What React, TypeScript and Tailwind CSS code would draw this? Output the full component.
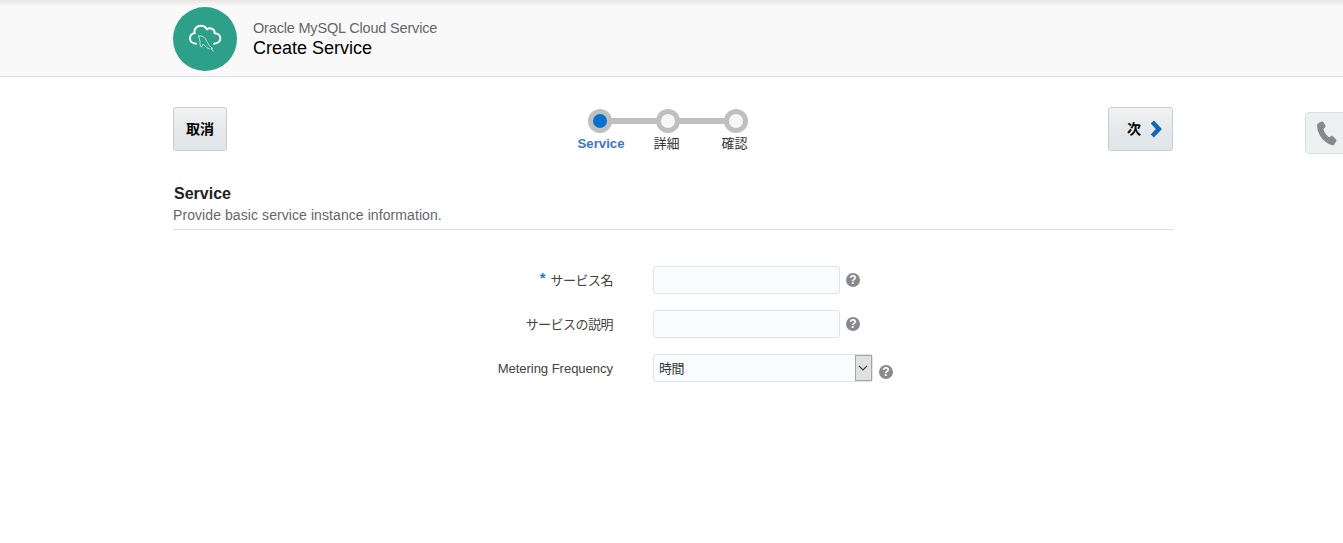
import React from "react";

const jp = "font-['Liberation_Sans','Noto_Sans_CJK_JP',sans-serif]";

function ServiceLogo() {
  return (
    <div className="h-16 w-16 shrink-0 rounded-full bg-[#2ca089]">
      <svg viewBox="-27 -33 192 192" className="h-16 w-16" fill="none" stroke="#fff" strokeLinecap="round" strokeLinejoin="round">
        <path
          strokeWidth="6"
          d="M42 77C31 77 24 70 24 61C24 52 30 46 38 46C35 32 45 23 57 23C66 23 71 27 75 34C85 27 99 34 98 46C108 46 115 53 115 61C115 70 108 77 96 77"
        />
        <path
          strokeWidth="2"
          d="M50 54C56 52 65 55 70 62C75 69 77 77 82 83L92 91L87 92L95 100M50 54C50 60 54 64 54 70C54 78 53 84 59 88L62 79C66 79 68 83 73 88L82 93"
        />
      </svg>
    </div>
  );
}

function Step({ label, active }: { label: string; active?: boolean }) {
  return (
    <div className="flex w-[68px] flex-col items-center">
      <div className="flex h-6 w-6 shrink-0 items-center justify-center rounded-full bg-[#bfbfbf]">
        <div className={active ? "h-[14px] w-[14px] rounded-full bg-[#0572ce]" : "h-[14px] w-[14px] rounded-full bg-[#f5f7f9]"} />
      </div>
      <span
        className={
          active
            ? "mt-0.5 ml-[3px] text-[13.2px] leading-[18px] font-bold whitespace-nowrap text-[#4073cf]"
            : "mt-0.5 mr-[2px] text-[13px] leading-[18px] whitespace-nowrap text-[#333]"
        }
      >
        {label}
      </span>
    </div>
  );
}

function Help() {
  return (
    <span className="flex h-[14px] w-[14px] items-center justify-center rounded-full bg-[#868a8d] text-[12px] leading-none font-bold text-white">
      ?
    </span>
  );
}

function Field({ label, required, latin, children }: { label: string; required?: boolean; latin?: boolean; children: React.ReactNode }) {
  return (
    <div className="flex h-7 items-center">
      <label className="flex w-[440px] justify-end text-[13px] text-[#444]">
        {required && <span className="mr-[5px] text-[15px] leading-4 font-bold text-[#2a7fc4]">*</span>}
        <span className={latin ? "pt-0.5 text-[13.1px] tracking-[-0.06px]" : "pt-px tracking-[-0.04em]"}>{label}</span>
      </label>
      <div className="ml-10 flex items-center">{children}</div>
    </div>
  );
}

const button =
  "flex h-11 items-center rounded-[3px] border border-[#c4ced7] bg-linear-to-b from-[#f1f3f4] to-[#e3e7e9] to-60% text-sm font-bold text-black";

export default function App() {
  return (
    <div className={`${jp} h-[543px] w-full overflow-hidden bg-white`}>
      <header className="h-[77px] border-b border-[#d6dfe6] bg-[#f9f9f9] bg-linear-to-b from-[#e6e6e6] to-[#f9f9f9] to-[6px]">
        <div className="ml-[173px] flex w-[1000px] gap-4 pt-[7px]">
          <ServiceLogo />
          <div className="pt-3">
            <p className="text-[14.5px] leading-[18px] tracking-[-0.18px] text-[#666]">Oracle MySQL Cloud Service</p>
            <h1 className="text-lg leading-[22px] text-black">Create Service</h1>
          </div>
        </div>
      </header>

      <div className="flex">
        <main className="ml-[173px] w-[1000px] pt-[30px]">
          <div className="flex h-11 justify-between">
            <button className={`${button} w-[54px] justify-center`}>取消</button>
            <div className="relative flex pt-0.5">
              <div className="absolute top-[11px] left-[34px] h-1.5 w-[136px] bg-[#bfbfbf]" />
              <div className="relative flex">
                <Step label="Service" active />
                <Step label="詳細" />
                <Step label="確認" />
              </div>
            </div>
            <button className={`${button} w-[65px] gap-[9px] pl-[18px]`}>
              次
              <svg viewBox="0 0 12 18" className="h-[18px] w-3" fill="none" stroke="#1467b8" strokeWidth="4.4">
                <path d="M2.3 2L8.9 9L2.3 16" />
              </svg>
            </button>
          </div>

          <section className="mt-8 h-[47px] border-b border-[#d6dfe6]">
            <h2 className="pl-px text-base leading-[21px] font-bold text-[#222]">Service</h2>
            <p className="text-sm leading-[22px] tracking-[0.08px] text-[#666]">Provide basic service instance information.</p>
          </section>

          <form className="mt-9 flex flex-col gap-4">
            <Field label="サービス名" required>
              <input className="mr-1.5 h-7 w-[187px] rounded-[3px] border border-[#dfe4e7] bg-[#fafdff]" />
              <Help />
            </Field>
            <Field label="サービスの説明">
              <input className="mr-1.5 h-7 w-[187px] rounded-[3px] border border-[#dfe4e7] bg-[#fafdff]" />
              <Help />
            </Field>
            <Field label="Metering Frequency" latin>
              <div className="mr-1.5 flex h-7 w-[220px] items-stretch justify-between rounded-[3px] border border-[#dfe4e7] bg-[#fafdff] text-[13px] text-[#333]">
                <span className="pl-[5px] leading-[27px] tracking-[-0.04em]">時間</span>
                <span className="flex w-[17px] items-center justify-center border border-[#a5a5a5] bg-[#e1e1e1]">
                  <svg viewBox="0 0 10 6" className="mr-px h-1.5 w-2.5 shrink-0" fill="none" stroke="#444" strokeWidth="1.2">
                    <path d="M1 1L5 5L9 1" />
                  </svg>
                </span>
              </div>
              <div className="pt-2">
                <Help />
              </div>
            </Field>
          </form>
        </main>

        <aside className="mt-[35px] ml-auto flex h-[42px] w-[38px] items-center rounded-l-[5px] border border-r-0 border-[#d6dfe6] bg-[#edf1f2] pl-[11px]">
          <svg viewBox="0 0 20 25" className="h-[25px] w-5 shrink-0" fill="#868a8d">
            <path d="M.8 2.6L4.6.6C5.3.3 5.9.4 6.3 1L8.5 4.8C8.8 5.4 8.7 5.9 8.2 6.3L6.9 7.6C6.5 8 6.4 8.4 6.6 9C7.6 11.7 9.2 14 11.3 15.8C11.7 16.2 12.2 16.2 12.6 15.9L14.3 15C14.9 14.7 15.4 14.7 15.9 15.2L19.2 18.4C19.7 18.9 19.8 19.5 19.4 20.1L17.2 23.4C16.7 24.1 16 24.4 15.2 24.2C7.2 22.4.5 14 .1 5.1C.1 4.1.2 3.1.8 2.6Z" />
          </svg>
        </aside>
      </div>
    </div>
  );
}
